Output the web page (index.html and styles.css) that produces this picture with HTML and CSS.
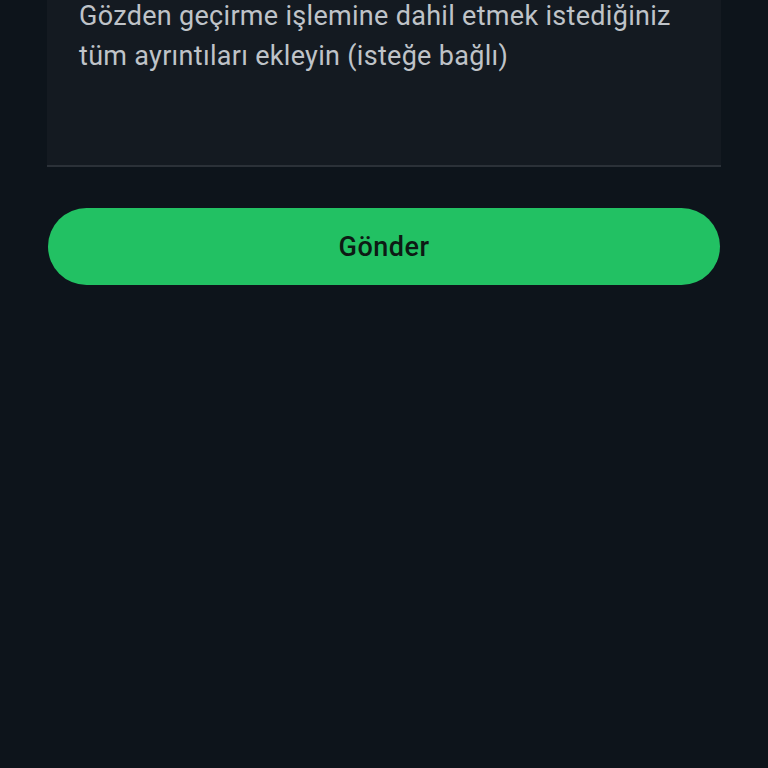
FILE: index.html
```html
<!DOCTYPE html>
<html lang="tr">
<head>
<meta charset="utf-8">
<link rel="stylesheet" href="styles.css">
</head>
<body>
<main class="page">
  <div class="field">
    <p class="placeholder">Gözden geçirme işlemine dahil etmek istediğiniz tüm ayrıntıları ekleyin (isteğe bağlı)</p>
  </div>
  <button class="submit" type="button">Gönder</button>
</main>
</body>
</html>
```
FILE: styles.css
```css
html, body {
  margin: 0;
  padding: 0;
  background: #0d141b;
  height: 100%;
  overflow: hidden;
}
.page {
  padding: 0 47px;
  display: flex;
  flex-direction: column;
  font-family: Roboto, "Noto Sans", sans-serif;
}
.field {
  margin-top: -22px;
  height: 189px;
  box-sizing: border-box;
  background: #141a21;
  border-bottom: 2px solid #2b3138;
  padding: 18px 30px 0 32px;
}
.placeholder {
  margin: 0;
  font-size: 27px;
  line-height: 40px;
  letter-spacing: 0.3px;
  color: #bfc3c8;
}
.submit {
  margin-top: 41px;
  height: 77px;
  border: none;
  border-radius: 39px;
  background: #22c163;
  color: #0d1a14;
  font-family: Roboto, "Noto Sans", sans-serif;
  font-size: 27px;
  font-weight: 500;
  letter-spacing: 0.5px;
  cursor: pointer;
  margin-left: 1px;
  margin-right: 1px;
}
```
